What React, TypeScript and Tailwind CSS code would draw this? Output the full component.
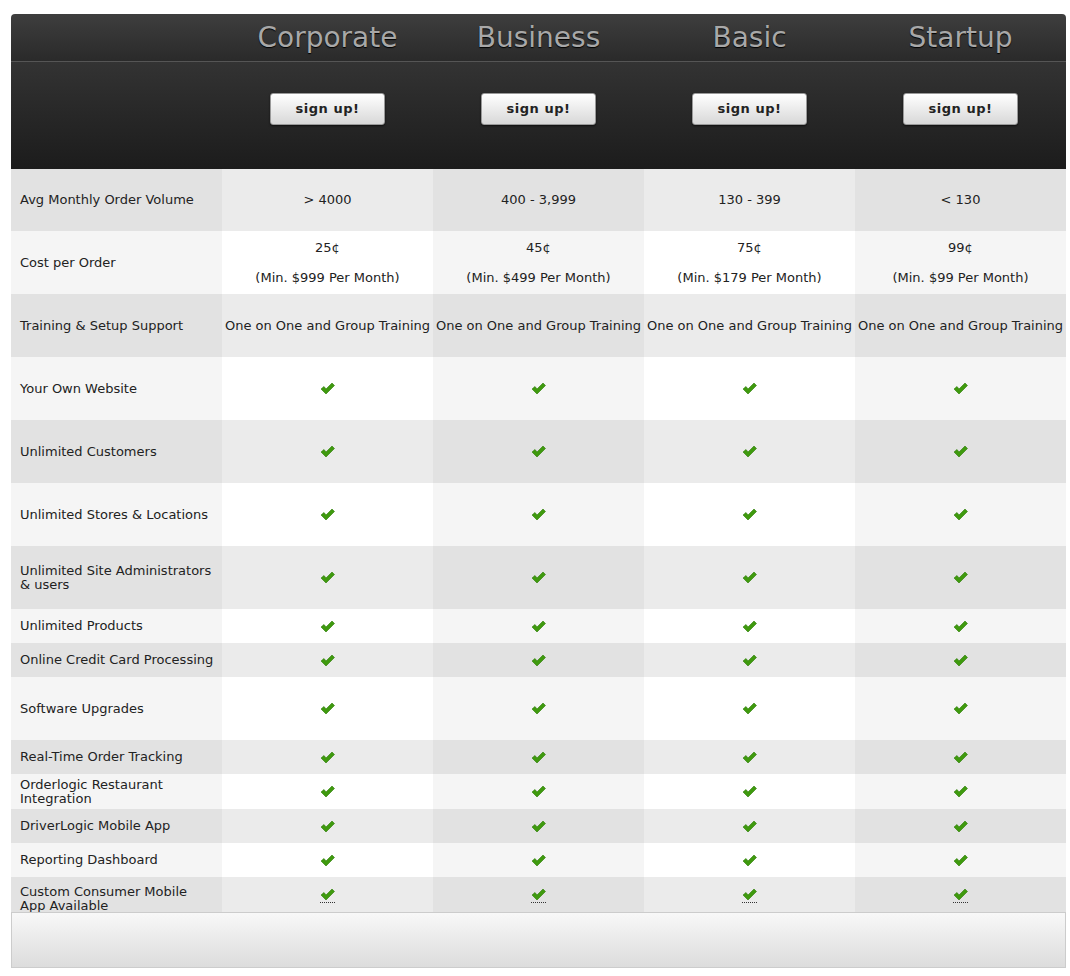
import React from "react";

const plans = ["Corporate", "Business", "Basic", "Startup"];
type Row = { label: string; h: number; cells?: React.ReactNode[] };
const C = "check";
const rows: Row[] = [
  { label: "Avg Monthly Order Volume", h: 62, cells: ["> 4000", "400 - 3,999", "130 - 399", "< 130"] },
  { label: "Cost per Order", h: 63, cells: [["25¢", "$999"], ["45¢", "$499"], ["75¢", "$179"], ["99¢", "$99"]].map(([a, b]) => (
    <div className="flex flex-col items-center gap-[10px]"><span>{a}</span><span>(Min. {b} Per Month)</span></div>)) },
  { label: "Training & Setup Support", h: 63, cells: plans.map(() => "One on One and Group Training") },
  { label: "Your Own Website", h: 63 },
  { label: "Unlimited Customers", h: 63 },
  { label: "Unlimited Stores & Locations", h: 63 },
  { label: "Unlimited Site Administrators & users", h: 63 },
  { label: "Unlimited Products", h: 34 },
  { label: "Online Credit Card Processing", h: 34 },
  { label: "Software Upgrades", h: 63 },
  { label: "Real-Time Order Tracking", h: 34 },
  { label: "Orderlogic Restaurant Integration", h: 35 },
  { label: "DriverLogic Mobile App", h: 34 },
  { label: "Reporting Dashboard", h: 34 },
  { label: "Custom Consumer Mobile App Available", h: 35 },
];

const Check = ({ u }: { u?: boolean }) => (
  <span className={u ? "border-b border-dotted border-[#333] pb-[1px] leading-none" : "leading-none"}>
    <svg width="15" height="13" viewBox="0 0 15 13">
      <path d="M1 7 L4 4.5 L6 7 L12 1 L14.5 3.5 L6 12 Z" fill="#3f9a0e" stroke="#2c7a06" strokeWidth="0.6" strokeLinejoin="round" />
    </svg>
  </span>
);

export default function App() {
  return (
    <div className="bg-white w-[1070px] h-[976px] pt-[14px] pl-[11px]" style={{ fontFamily: '"DejaVu Sans", sans-serif' }}>
      <div className="w-[1055px]">
        <div className="grid grid-cols-[211px_211px_211px_211px_211px] h-[48px] rounded-t-[4px] bg-gradient-to-b from-[#3e3e3e] to-[#2a2a2a] border-b border-[#555]">
          <div />
          {plans.map((p) => (
            <div key={p} className="flex items-center justify-center text-[28px] text-[#a8a8a8] [text-shadow:0_1px_1px_#000]">{p}</div>
          ))}
        </div>
        <div className="grid grid-cols-[211px_211px_211px_211px_211px] h-[107px] bg-gradient-to-b from-[#333] to-[#1c1c1c]">
          <div />
          {plans.map((p) => (
            <div key={p} className="flex justify-center pt-[31px]">
              <button className="w-[115px] h-[32px] rounded-[3px] bg-gradient-to-b from-white to-[#d8d8d8] border border-[#999] shadow-[0_1px_2px_rgba(0,0,0,0.6)] text-[13px] font-bold text-[#222] tracking-[0.5px]">sign up!</button>
            </div>
          ))}
        </div>
        {rows.map((r, i) => {
          const grey = i % 2 === 0;
          const bg = (c: number) =>
            grey ? (c % 2 === 1 ? "bg-[#ebebeb]" : "bg-[#e2e2e2]") : c % 2 === 1 ? "bg-white" : "bg-[#f5f5f5]";
          const last = i === rows.length - 1;
          return (
            <div key={r.label} className="grid grid-cols-[211px_211px_211px_211px_211px] text-[13px] text-[#222] overflow-hidden" style={{ height: r.h }}>
              <div className={`${bg(0)} flex items-center pl-[9px] pr-[8px] leading-[14px]`}>
                <span className={last ? "border-b border-dotted border-[#333] pt-[8px]" : ""}>{r.label}</span>
              </div>
              {[0, 1, 2, 3].map((c) => (
                <div key={c} className={`${bg(c + 1)} flex items-center justify-center text-center`}>
                  {r.cells ? r.cells[c] : <Check u={last} />}
                </div>
              ))}
            </div>
          );
        })}
        <div className="h-[56px] border border-[#ccc] bg-gradient-to-b from-[#f8f8f8] to-[#dcdcdc]" />
      </div>
    </div>
  );
}
